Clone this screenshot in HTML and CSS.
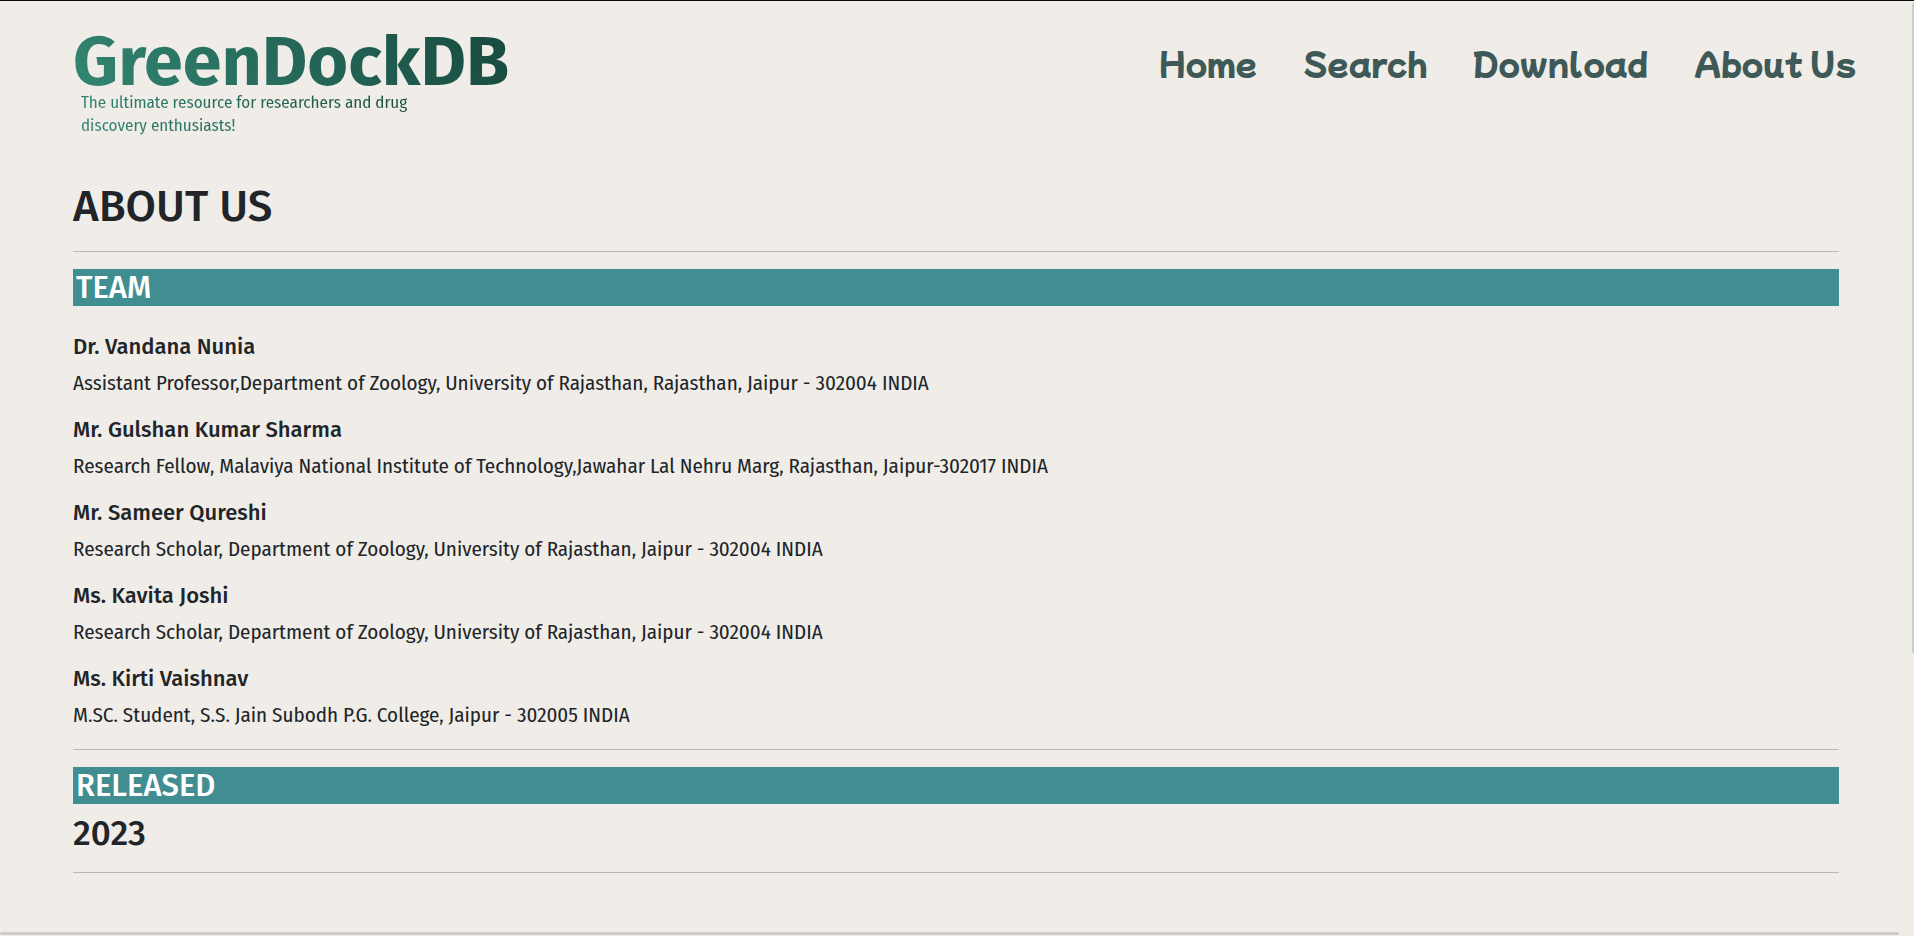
FILE: index.html
```html
<!DOCTYPE html>
<html lang="en">
<head>
<meta charset="utf-8">
<title>GreenDockDB - About Us</title>
<meta name="viewport" content="width=device-width, initial-scale=1">
<link rel="stylesheet" href="styles.css">
</head>
<body>
<header class="site-header">
  <div class="brand">
    <a class="brand-name" href="#">GreenDockDB</a>
    <p class="brand-tagline">The ultimate resource for researchers and drug discovery enthusiasts!</p>
  </div>
  <nav class="site-nav" aria-label="Main">
    <a href="#">Home</a>
    <a href="#">Search</a>
    <a href="#">Download</a>
    <a href="#">About Us</a>
  </nav>
</header>
<main class="content">
  <h1 class="page-title">ABOUT US</h1>
  <hr class="rule">
  <section>
    <h2 class="section-bar">TEAM</h2>
    <div class="team">
      <article class="member">
        <h3>Dr. Vandana Nunia</h3>
        <p>Assistant Professor,Department of Zoology, University of Rajasthan, Rajasthan, Jaipur - 302004 INDIA</p>
      </article>
      <article class="member">
        <h3>Mr. Gulshan Kumar Sharma</h3>
        <p>Research Fellow, Malaviya National Institute of Technology,Jawahar Lal Nehru Marg, Rajasthan, Jaipur-302017 INDIA</p>
      </article>
      <article class="member">
        <h3>Mr. Sameer Qureshi</h3>
        <p>Research Scholar, Department of Zoology, University of Rajasthan, Jaipur - 302004 INDIA</p>
      </article>
      <article class="member">
        <h3>Ms. Kavita Joshi</h3>
        <p>Research Scholar, Department of Zoology, University of Rajasthan, Jaipur - 302004 INDIA</p>
      </article>
      <article class="member">
        <h3>Ms. Kirti Vaishnav</h3>
        <p>M.SC. Student, S.S. Jain Subodh P.G. College, Jaipur - 302005 INDIA</p>
      </article>
    </div>
  </section>
  <hr class="rule">
  <section>
    <h2 class="section-bar">RELEASED</h2>
    <p class="release-year">2023</p>
  </section>
  <hr class="rule">
</main>
<div class="scroll-thumb scroll-thumb-y" aria-hidden="true"></div>
<div class="scroll-thumb scroll-thumb-x" aria-hidden="true"></div>
</body>
</html>
```
FILE: styles.css
```css
* {
  box-sizing: border-box;
}

body {
  margin: 0;
  border-top: 1px solid #0c070c;
  background: #f0ede8;
  color: #212529;
  font-family: "Fira Sans", "Noto Sans", sans-serif;
}

.site-header {
  display: flex;
  justify-content: space-between;
  align-items: flex-start;
  padding: 33px 58px 0 73px;
}

.brand-name,
.brand-tagline {
  background: linear-gradient(60deg, #328672, #184a3f);
  background-clip: text;
  -webkit-background-clip: text;
  color: transparent;
}

.brand-name {
  display: block;
  font-size: 70px;
  font-weight: 700;
  line-height: 57px;
  text-decoration: none;
}

.brand-tagline {
  max-width: 344px;
  margin: 0 0 0 8px;
  font-family: "Fira Sans Condensed", "Fira Sans", sans-serif;
  font-size: 17px;
  line-height: 23px;
}

.site-nav {
  display: flex;
  gap: 46px;
  padding-top: 5px;
}

.site-nav a {
  color: #3e5957;
  font-family: "Mochiy Pop One", "Playpen Sans", Lato, sans-serif;
  font-size: 31px;
  font-weight: 400;
  line-height: 48px;
  text-decoration: none;
}

.content {
  padding: 43px 75px 60px 73px;
}

.page-title {
  margin: 0 0 18px;
  font-size: 44px;
  font-weight: 500;
  line-height: 53px;
}

.rule {
  height: 1px;
  margin: 0 0 17px;
  border: 0;
  background: #bab8b6;
}

.section-bar {
  margin: 0;
  padding: 0 3px;
  background: #408e92;
  color: #fff;
  font-size: 31px;
  font-weight: 500;
  line-height: 37px;
}

.team {
  padding: 27px 0 18px;
  display: grid;
  gap: 17px;
}

.member h3 {
  margin: 0 0 6px;
  font-size: 22px;
  font-weight: 500;
  line-height: 28px;
}

.member p {
  margin: 0;
  font-family: "Fira Sans Condensed", "Fira Sans", sans-serif;
  font-size: 21px;
  line-height: 32px;
}

.release-year {
  margin: 8px 0 17px;
  font-size: 35px;
  font-weight: 500;
  line-height: 43px;
}

.scroll-thumb {
  position: fixed;
  border-radius: 2px;
  background: #cdcdcd;
}

.scroll-thumb-y {
  top: 3px;
  right: 0;
  width: 2px;
  height: 650px;
}

.scroll-thumb-x {
  bottom: 1px;
  left: 0;
  right: 15px;
  height: 3px;
}
```
